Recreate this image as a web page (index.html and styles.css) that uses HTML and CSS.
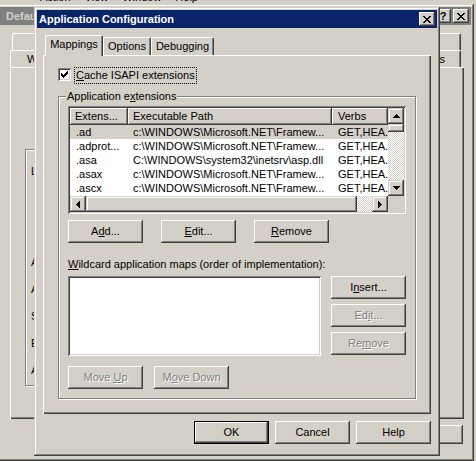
FILE: index.html
```html
<!DOCTYPE html>
<html lang="en">
<head>
<meta charset="utf-8">
<title>Application Configuration</title>
<link rel="stylesheet" href="styles.css">
</head>
<body>
<div class="desk">
  <div class="ghost-menu"><span class="gm1">Action</span><span class="gm2">View</span><span class="gm3">Window</span><span class="gm4">Help</span></div>

  <div class="win bgwin">
    <div class="cap cap-inactive">
      <span class="cap-title">Default Web Site Properties</span>
      <span class="cap-btn cap-help">?</span>
      <span class="cap-btn cap-close"><svg class="xg" width="8" height="7" viewBox="0 0 8 7"><path d="M0 0h2v1H0zM6 0h2v1H6zM1 1h2v1H1zM5 1h2v1H5zM2 2h4v1H2zM3 3h2v1H3zM2 4h4v1H2zM1 5h2v1H1zM5 5h2v1H5zM0 6h2v1H0zM6 6h2v1H6z"/></svg></span>
    </div>
    <div class="bg-body">
      <div class="bg-tabrow bg-row1">
        <span class="bg-tab bg-r1first">Directory Security</span>
        <span class="bg-tab">HTTP Headers</span>
        <span class="bg-tab">Custom Errors</span>
        <span class="bg-tab">ASP.NET</span>
      </div>
      <div class="bg-tabrow bg-row2">
        <span class="bg-tab bg-first">Web Site</span>
        <span class="bg-tab">Performance</span>
        <span class="bg-tab">ISAPI Filters</span>
        <span class="bg-tab">Home Directory</span>
        <span class="bg-tab bg-last">Documents</span>
      </div>
      <div class="bg-panel">
        <div class="bg-group">
          <div class="bg-label">Local path:</div>
          <div class="bg-label l2">Application name:</div>
          <div class="bg-label l3">Application pool:</div>
          <div class="bg-label l3">Starting point:</div>
          <div class="bg-label l3">Execute permissions:</div>
          <div class="bg-label l3">Application pool:</div>
        </div>
      </div>
      <div class="bg-buttons"><span class="btn bg-btn">OK</span><span class="btn bg-btn">Cancel</span><span class="btn bg-btn">Apply</span><span class="btn bg-btn">Help</span></div>
    </div>
  </div>

  <div class="win dlg">
    <div class="cap cap-active">
      <span class="cap-title">Application Configuration</span>
      <span class="cap-btn cap-close"><svg class="xg" width="8" height="7" viewBox="0 0 8 7"><path d="M0 0h2v1H0zM6 0h2v1H6zM1 1h2v1H1zM5 1h2v1H5zM2 2h4v1H2zM3 3h2v1H3zM2 4h4v1H2zM1 5h2v1H1zM5 5h2v1H5zM0 6h2v1H0zM6 6h2v1H6z"/></svg></span>
    </div>
    <div class="dlg-body">
      <div class="tabs">
        <span class="tab tab-sel">Mappings</span>
        <span class="tab t-opt">Options</span>
        <span class="tab t-dbg">Debugging</span>
      </div>
      <div class="panel">
        <div class="chk-row">
          <span class="chk"><svg width="7" height="7" viewBox="0 0 7 7"><path d="M6 0h1v3H6zM5 1h1v3H5zM4 2h1v3H4zM0 2h1v3H0zM1 3h1v3H1zM2 4h1v3H2zM3 3h1v3H3z"/></svg></span>
          <span class="chk-label"><u>C</u>ache ISAPI extensions</span>
        </div>
        <div class="group">
          <div class="legend">Application e<u>x</u>tensions</div>
          <div class="lv">
            <div class="lv-main">
              <div class="lv-head"><span class="hc c1">Extens...</span><span class="hc c2">Executable Path</span><span class="hc c3">Verbs</span></div>
              <div class="lv-row sel"><span class="c1">.ad</span><span class="c2">c:\WINDOWS\Microsoft.NET\Framew...</span><span class="c3">GET,HEA..</span></div>
              <div class="lv-row"><span class="c1">.adprot...</span><span class="c2">c:\WINDOWS\Microsoft.NET\Framew...</span><span class="c3">GET,HEA..</span></div>
              <div class="lv-row"><span class="c1">.asa</span><span class="c2">C:\WINDOWS\system32\inetsrv\asp.dll</span><span class="c3">GET,HEA..</span></div>
              <div class="lv-row"><span class="c1">.asax</span><span class="c2">c:\WINDOWS\Microsoft.NET\Framew...</span><span class="c3">GET,HEA..</span></div>
              <div class="lv-row"><span class="c1">.ascx</span><span class="c2">c:\WINDOWS\Microsoft.NET\Framew...</span><span class="c3">GET,HEA..</span></div>
            </div>
            <div class="vscroll">
              <span class="sb-btn"><svg width="7" height="4" viewBox="0 0 7 4"><path d="M3 0h1v1h1v1h1v1h1v1H0V3h1V2h1V1h1z"/></svg></span>
              <span class="sb-thumb vthumb"></span>
              <span class="sb-track"></span>
              <span class="sb-btn"><svg width="7" height="4" viewBox="0 0 7 4"><path d="M0 0h7v1H6v1H5v1H4v1H3V3H2V2H1V1H0z"/></svg></span>
            </div>
            <div class="hscroll">
              <span class="sb-btn"><svg width="4" height="7" viewBox="0 0 4 7"><path d="M3 0h1v7H3V6H2V5H1V4H0V3h1V2h1V1h1z"/></svg></span>
              <span class="sb-thumb hthumb"></span>
              <span class="sb-track"></span>
              <span class="sb-btn"><svg width="4" height="7" viewBox="0 0 4 7"><path d="M0 0h1v1h1v1h1v1h1v1H3v1H2v1H1v1H0z"/></svg></span>
            </div>
            <div class="sb-corner"></div>
          </div>
          <div class="btn-row top-btns"><span class="btn">A<u>d</u>d...</span><span class="btn"><u>E</u>dit...</span><span class="btn"><u>R</u>emove</span></div>
          <div class="wild-label"><u>W</u>ildcard application maps (order of implementation):</div>
          <div class="wild-row">
            <div class="listbox"></div>
            <div class="side-btns"><span class="btn">I<u>n</u>sert...</span><span class="btn dis">Ed<u>i</u>t...</span><span class="btn dis">Re<u>m</u>ove</span></div>
          </div>
          <div class="btn-row move-btns"><span class="btn dis">Move <u>U</u>p</span><span class="btn dis">M<u>o</u>ve Down</span></div>
        </div>
      </div>
      <div class="dlg-buttons"><span class="btn def">OK</span><span class="btn">Cancel</span><span class="btn">Help</span></div>
    </div>
  </div>
</div>
</body>
</html>
```

FILE: styles.css
```css
* { box-sizing: border-box; margin: 0; padding: 0; }
html, body { width: 476px; height: 461px; overflow: hidden; }
body {
  background: #d4d0c8;
  font: 11px "Liberation Sans", Arial, sans-serif;
  color: #000;
}
u { text-decoration: underline; text-underline-offset: 1px; }
svg { display: block; shape-rendering: crispEdges; }
svg path { fill: #000; }

.desk { position: relative; width: 476px; height: 461px; overflow: hidden; background: #d4d0c8; }

/* menu of the window further behind, almost fully hidden */
.ghost-menu { position: absolute; left: 0; top: -9px; height: 12px; display: flex; line-height: 12px; color: #000; white-space: nowrap; }
.gm1 { margin-left: 40px; }
.gm2 { margin-left: 14px; }
.gm3 { margin-left: 14px; }
.gm4 { margin-left: 14px; }

/* classic window frame */
.win {
  position: absolute;
  background: #d4d0c8;
  padding: 3px;
  display: flex;
  flex-direction: column;
  box-shadow: inset -1px -1px #404040, inset 1px 1px #d4d0c8, inset -2px -2px #808080, inset 2px 2px #fff;
}
.bgwin { left: -3px; top: 4px; width: 477px; height: 457px; }
.dlg { left: 34px; top: 7px; width: 406px; height: 449px; }

.cap {
  flex: none;
  height: 18px;
  display: flex;
  align-items: center;
  font-weight: bold;
  padding-left: 2px;
  white-space: nowrap;
}
.cap-active { background: #0a246a; color: #fff; }
.cap-inactive { background: #808080; color: #d4d0c8; padding-left: 6px; }
.cap-title { flex: 1; overflow: hidden; }
.cap-btn {
  flex: none;
  width: 16px;
  height: 14px;
  display: flex;
  align-items: center;
  justify-content: center;
  background: #d4d0c8;
  color: #000;
  box-shadow: inset -1px -1px #404040, inset 1px 1px #fff, inset -2px -2px #808080;
}
.cap-close { margin-right: 2px; }
.cap-help { margin-right: 2px; font-weight: bold; font-size: 11px; line-height: 14px; }

/* ---------- background properties window ---------- */
.bg-body { flex: 1; display: flex; flex-direction: column; padding: 8px 7px 0 10px; }
.bg-tabrow { flex: none; height: 17px; display: flex; }
.bg-row1 { margin: 0 3px 0 2px; }
.bg-row2 { margin: 0 3px 0 0; }
.bg-tab {
  flex: 1;
  border-top: 1px solid #fff;
  border-left: 1px solid #fff;
  border-right: 1px solid #404040;
  box-shadow: inset -1px 0 #808080;
  border-radius: 2px 2px 0 0;
  line-height: 16px;
  white-space: nowrap;
  overflow: hidden;
  text-align: center;
}
.bg-r1first { text-align: left; padding-left: 30px; }
.bg-first { text-align: left; padding-left: 16px; }
.bg-last { text-align: right; padding-right: 15px; }
.bg-panel {
  flex: none;
  height: 352px;
  padding: 82px 0 0 15px;
  box-shadow: inset 1px 1px #fff, inset -1px -1px #404040, inset -2px -2px #808080;
}
.bg-group {
  width: 300px;
  height: 237px;
  border: 1px solid #808080;
  box-shadow: inset 1px 1px #fff, 1px 1px #fff;
  padding: 15px 0 0 5px;
}
.bg-label { line-height: 13px; height: 13px; white-space: nowrap; }
.l2 { margin-top: 78px; }
.l3 { margin-top: 14px; }
.bg-buttons { flex: none; display: flex; justify-content: flex-end; gap: 6px; margin: 6px 1px 0 0; }
.btn.bg-btn { height: 19px; line-height: 18px; }

/* ---------- dialog ---------- */
.dlg-body { flex: 1; display: flex; flex-direction: column; padding: 7px 6px 9px; }
.tabs { flex: none; height: 20px; display: flex; align-items: flex-end; padding-left: 2px; }
.tab {
  flex: none;
  height: 18px;
  line-height: 16px;
  text-align: center;
  border-top: 1px solid #fff;
  border-left: 1px solid #fff;
  border-right: 1px solid #404040;
  box-shadow: inset -1px 0 #808080;
  border-radius: 2px 2px 0 0;
  white-space: nowrap;
  background: #d4d0c8;
}
.tab-sel { width: 58px; height: 21px; line-height: 17px; margin-bottom: -1px; position: relative; z-index: 1; }
.t-opt { width: 48px; }
.t-dbg { width: 63px; }

.panel {
  flex: 1;
  padding: 12px 14px 0 15px;
  box-shadow: inset 1px 1px #fff, inset -1px -1px #404040, inset -2px -2px #808080;
}
.chk-row { display: flex; align-items: flex-start; height: 17px; }
.chk {
  flex: none;
  width: 13px;
  height: 13px;
  margin-top: 1px;
  padding: 3px;
  background: #fff;
  box-shadow: inset 1px 1px #808080, inset -1px -1px #fff, inset 2px 2px #404040, inset -2px -2px #d4d0c8;
}
.chk-label {
  margin-left: 3px;
  height: 17px;
  line-height: 15px;
  padding: 0 1px;
  border: 1px dotted #000;
  white-space: nowrap;
}

.group {
  width: 358px;
  margin-top: 12px;
  padding: 0 9px 9px;
  border: 1px solid #808080;
  box-shadow: inset 1px 1px #fff, 1px 1px #fff;
}
.legend {
  width: max-content;
  height: 13px;
  line-height: 13px;
  margin: -7px 0 0 -2px;
  padding: 0 1px;
  background: #d4d0c8;
}

.lv {
  width: 338px;
  height: 108px;
  margin-top: 3px;
  padding: 2px;
  display: grid;
  grid-template-columns: 318px 16px;
  grid-template-rows: 88px 16px;
  background: #fff;
  box-shadow: inset 1px 1px #808080, inset -1px -1px #fff, inset 2px 2px #404040, inset -2px -2px #d4d0c8;
}
.lv-main { overflow: hidden; background: #fff; }
.lv-head { display: flex; height: 17px; }
.hc {
  height: 17px;
  line-height: 17px;
  background: #d4d0c8;
  box-shadow: inset -1px -1px #404040, inset 1px 1px #fff, inset -2px -2px #808080;
}
.lv-row { display: flex; height: 14px; line-height: 14px; }
.lv-row.sel { background: #d4d0c8; }
.c1, .c2, .c3 { flex: none; white-space: nowrap; overflow: hidden; }
.c1 { width: 58px; padding-left: 6px; }
.c2 { width: 204px; padding-left: 5px; }
.c3 { width: 56px; padding-left: 6px; }
.hc.c1 { padding-left: 5px; }
.hc.c2 { padding-left: 5px; }
.hc.c3 { padding-left: 6px; }

.vscroll { display: flex; flex-direction: column; }
.hscroll { display: flex; }
.sb-btn, .sb-thumb {
  flex: none;
  width: 16px;
  height: 16px;
  display: flex;
  align-items: center;
  justify-content: center;
  background: #d4d0c8;
  box-shadow: inset -1px -1px #404040, inset 1px 1px #d4d0c8, inset -2px -2px #808080, inset 2px 2px #fff;
}
.vthumb { height: 8px; }
.hthumb { width: 271px; }
.sb-track { flex: 1; background: repeating-conic-gradient(#fff 0 25%, #d4d0c8 0 50%) 0 0 / 2px 2px; }
.sb-corner { background: #d4d0c8; }

.btn {
  flex: none;
  display: block;
  width: 75px;
  height: 23px;
  line-height: 22px;
  text-align: center;
  white-space: nowrap;
  background: #d4d0c8;
  box-shadow: inset -1px -1px #404040, inset 1px 1px #fff, inset -2px -2px #808080, inset 2px 2px #d4d0c8;
}
.btn.def { box-shadow: inset 0 0 0 1px #000, inset -2px -2px #404040, inset 2px 2px #fff, inset -3px -3px #808080; }
.btn.dis { color: #808080; text-shadow: 1px 1px #fff; }

.btn-row { display: flex; }
.top-btns { gap: 18px; margin-top: 6px; }
.wild-label { margin-top: 15px; height: 13px; line-height: 13px; white-space: nowrap; }
.wild-row { display: flex; gap: 10px; margin-top: 5px; height: 80px; }
.listbox {
  width: 253px;
  height: 80px;
  background: #fff;
  box-shadow: inset 1px 1px #808080, inset -1px -1px #fff, inset 2px 2px #404040, inset -2px -2px #d4d0c8;
}
.side-btns { display: flex; flex-direction: column; gap: 5px; }
.move-btns { gap: 11px; margin-top: 10px; }

.dlg-buttons { flex: none; display: flex; justify-content: flex-end; gap: 6px; margin-top: 7px; }
```
